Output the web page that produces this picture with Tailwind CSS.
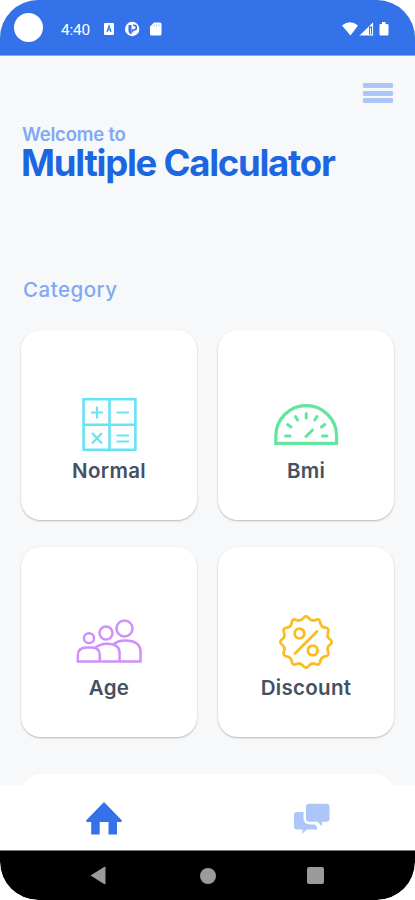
<!DOCTYPE html>
<html lang="en">
<head>
<meta charset="utf-8">
<meta name="viewport" content="width=device-width, initial-scale=1">
<title>Multiple Calculator</title>
<script src="https://cdn.jsdelivr.net/npm/@tailwindcss/browser@4"></script>
</head>
<body class="bg-white font-['Inter',sans-serif]">
<div class="relative flex h-[900px] w-[415px] flex-col overflow-hidden rounded-[38px] bg-[#f6f8fa]">
  <!-- Status bar -->
  <header class="flex h-14 shrink-0 items-center border-b border-[#86a8ef] bg-[#3472e9] pl-[14px] pr-[25px] text-white">
    <span class="mb-px size-[29px] rounded-full bg-white"></span>
    <span class="ml-[18px] mt-1 w-[43px] font-['Roboto',sans-serif] text-[15.3px] leading-5 tracking-[-0.1px] text-white">4:40</span>
    <svg class="mt-[3px] h-4 w-[62px]" viewBox="0 0 62 16" fill="#fff">
      <rect x="0" y="2" width="10" height="12" rx="1"/>
      <path d="M3 11 5 5l2 6M3.800 9h2.400" fill="none" stroke="#3472e9" stroke-width="1.200"/>
      <circle cx="28.200" cy="8" r="7.200"/>
      <path d="M29 4.200h1a2.400 2.400 0 0 1 0 4.800h-1.500v2.500" fill="none" stroke="#3472e9" stroke-width="1.600"/>
      <path d="M24.500 4h3v9.500q-3-1-3-4z" fill="#3472e9"/>
      <path d="M50 1.500h6q1.500 0 1.500 1.500v10q0 1.500-1.500 1.500h-8.500q-1.500 0-1.500-1.500V5.500z"/>
      <path d="M50 3.500v2M52.500 3.500v2M55 3.500v2" stroke="#9bbaf5" stroke-width=".8"/>
    </svg>
    <svg class="ml-auto mt-[3px] h-4 w-12" viewBox="0 0 48 16" fill="#fff">
      <path d="M0 4.500Q8 -2 16 4.500L8.500 14.500z"/>
      <path d="M17.500 14.500 31 1.500v13z"/>
      <path d="M27 5.500h4v8h-4z" fill="#3472e9"/>
      <path d="M28.500 7v6.500M30.600 2v12.500" stroke="#fff" stroke-width="1"/>
      <path d="M37.500 4q0-1 1-1h1.500V1h3.500v2H45q1.500 0 1.500 1v9.500q0 1-1 1h-7q-1 0-1-1z"/>
    </svg>
  </header>

  <!-- Page content -->
  <main class="h-[729px] shrink-0 overflow-hidden px-[21px]">
    <button class="ml-auto mr-px mt-[27px] flex h-5 w-[30px] flex-col justify-between" aria-label="Menu">
      <span class="h-[5px] w-full rounded-[1px] bg-[#acc6fa]"></span>
      <span class="h-[5px] w-full rounded-[1px] bg-[#acc6fa]"></span>
      <span class="h-[5px] w-full rounded-[1px] bg-[#acc6fa]"></span>
    </button>
    <p class="mt-[20px] h-[21px] whitespace-nowrap pl-px text-[18.500px] font-semibold leading-[22px] tracking-[-0.200px] text-[#80a9f3]">Welcome to</p>
    <h1 class="h-[39px] whitespace-nowrap text-[36.500px] font-bold leading-[39px] tracking-[-1.250px] text-[#1d66e2]">Multiple Calculator</h1>
    <h2 class="mt-[95px] h-6 pl-[2px] text-[20.500px] font-medium leading-6 tracking-[0.500px] text-[#80a9f3]">Category</h2>

    <section class="mt-[28px] grid grid-cols-[176px_176px] gap-x-[21px] gap-y-[27px]">
      <article class="flex h-[190px] flex-col items-center rounded-[20px] bg-white pt-[66px] shadow-[0_1px_2px_rgba(0,0,0,0.26)]">
        <svg class="h-[58px] w-[68px]" viewBox="0 0 68 58" fill="none" stroke="#67e4f3" stroke-width="2.600">
          <path d="M8.600 3.300h51.800v50.400H8.600zM34.500 3.300v50.400M8.600 28.800h51.800"/>
          <path d="M16 16.500h12M22 10.500v12M41.500 16.500h12.500M17 37l10 10.500M27 37l-10 10.500M41.500 39.500h12.500M41.500 45.500h12.500" stroke-width="2.200"/>
        </svg>
        <h3 class="mt-[5px] text-[20.500px] font-semibold leading-6 tracking-[0.300px] text-[#465063]">Normal</h3>
      </article>
      <article class="flex h-[190px] flex-col items-center rounded-[20px] bg-white pt-[66px] shadow-[0_1px_2px_rgba(0,0,0,0.26)]">
        <svg class="h-[58px] w-[68px]" viewBox="0 0 68 58" fill="none" stroke="#62e59d" stroke-width="3.200">
          <path d="M3.800 47.300V40a30.400 30.400 0 0 1 60.800 0v7.300z"/>
          <path d="M13.500 40h4.500M50.500 40H55M15.500 28.500l3.500 2.500M52.800 28.500 49.500 31M23.500 20.500l2 3.500M45 20.500 42.800 24M34.200 17.500V22M34 40.500l6.500-6.500" stroke-width="3" stroke-linecap="round"/>
        </svg>
        <h3 class="mt-[5px] text-[20.500px] font-semibold leading-6 tracking-[0.300px] text-[#465063]">Bmi</h3>
      </article>
      <article class="flex h-[190px] flex-col items-center rounded-[20px] bg-white pt-[66px] shadow-[0_1px_2px_rgba(0,0,0,0.26)]">
        <svg class="h-[58px] w-[68px]" viewBox="0 0 68 58" fill="none" stroke="#ce91fa" stroke-width="2.500">
          <circle cx="14" cy="25.200" r="5"/>
          <circle cx="31" cy="20" r="6.500"/>
          <circle cx="49.500" cy="15.500" r="8"/>
          <path d="M2.800 48.600v-6.100q0-8 9-8h5q8 0 8 8v6.100zM20 35q5-4.300 12-4.300 12.600 0 12.600 9v8.900M38 31.500q5-4.100 12-4.100 15.500 0 15.500 11.300v9.900H24"/>
        </svg>
        <h3 class="mt-[5px] text-[20.500px] font-semibold leading-6 tracking-[0.300px] text-[#465063]">Age</h3>
      </article>
      <article class="flex h-[190px] flex-col items-center rounded-[20px] bg-white pt-[66px] shadow-[0_1px_2px_rgba(0,0,0,0.26)]">
        <svg class="h-[58px] w-[68px]" viewBox="-34 -29 68 58" fill="none" stroke="#f9bd20" stroke-width="2.800">
          <g transform="scale(.98)">
            <path id="edge" d="M-2.800-24.400Q0-28 2.800-24.400Q5.600-20.800 9.800-22.500Q14-24.200 14.600-19.700Q15.200-15.200 19.700-14.600Q24.200-14 22.500-9.800Q20.800-5.600 24.400-2.800"/>
            <use href="#edge" transform="rotate(90)"/>
            <use href="#edge" transform="rotate(180)"/>
            <use href="#edge" transform="rotate(270)"/>
          </g>
          <circle cx="-6.500" cy="-8.500" r="4.800"/>
          <circle cx="6.700" cy="8.500" r="4.800"/>
          <path d="M-11 11.500 11-10.500" stroke-linecap="round"/>
        </svg>
        <h3 class="mt-[5px] text-[20.500px] font-semibold leading-6 tracking-[0.300px] text-[#465063]">Discount</h3>
      </article>
      <article class="col-span-2 mt-[10px] h-[190px] rounded-[20px] bg-white"></article>
    </section>
  </main>

  <!-- Tab bar -->
  <nav class="flex h-[65px] shrink-0 items-start justify-between bg-white pl-[86px] pr-[85px] pt-[16px]">
    <svg class="h-9 w-9" viewBox="0 0 36 36" fill="#3472e9">
      <path d="M18 1 35.500 19q1 2-1 2H31v12.500h-8.500V21h-8.800v12.500H5.200V21H1.500q-2 0-1-2z"/>
    </svg>
    <svg class="h-9 w-9" viewBox="0 0 36 36" fill="#acc6fa">
      <path d="M3 11h6.500v5.500q0 7 7 7h4.500l2 2.500v2.500h-10.500L8.500 33v-4.500H3q-3 0-3-3V14q0-3 3-3z"/>
      <path d="M15 2.800h17.500q3 0 3 3v12q0 3-3 3H28v4.500L23.500 20.800H15q-3 0-3-3v-12q0-3 3-3z"/>
    </svg>
  </nav>

  <!-- System navigation -->
  <footer class="flex h-[50px] shrink-0 items-center justify-between rounded-b-[38px] border-t border-[#777] bg-black pl-[90px] pr-[91px]">
    <svg class="h-[19px] w-4" viewBox="0 0 16 19" fill="#9b9b9b"><path d="M.5 9.500 14.500.8q1-.5 1 .6v16.200q0 1.100-1 .6z"/></svg>
    <span class="ml-[2px] size-4 rounded-full bg-[#9b9b9b]"></span>
    <span class="size-[17px] rounded-[2px] bg-[#9b9b9b]"></span>
  </footer>
</div>
</body>
</html>
